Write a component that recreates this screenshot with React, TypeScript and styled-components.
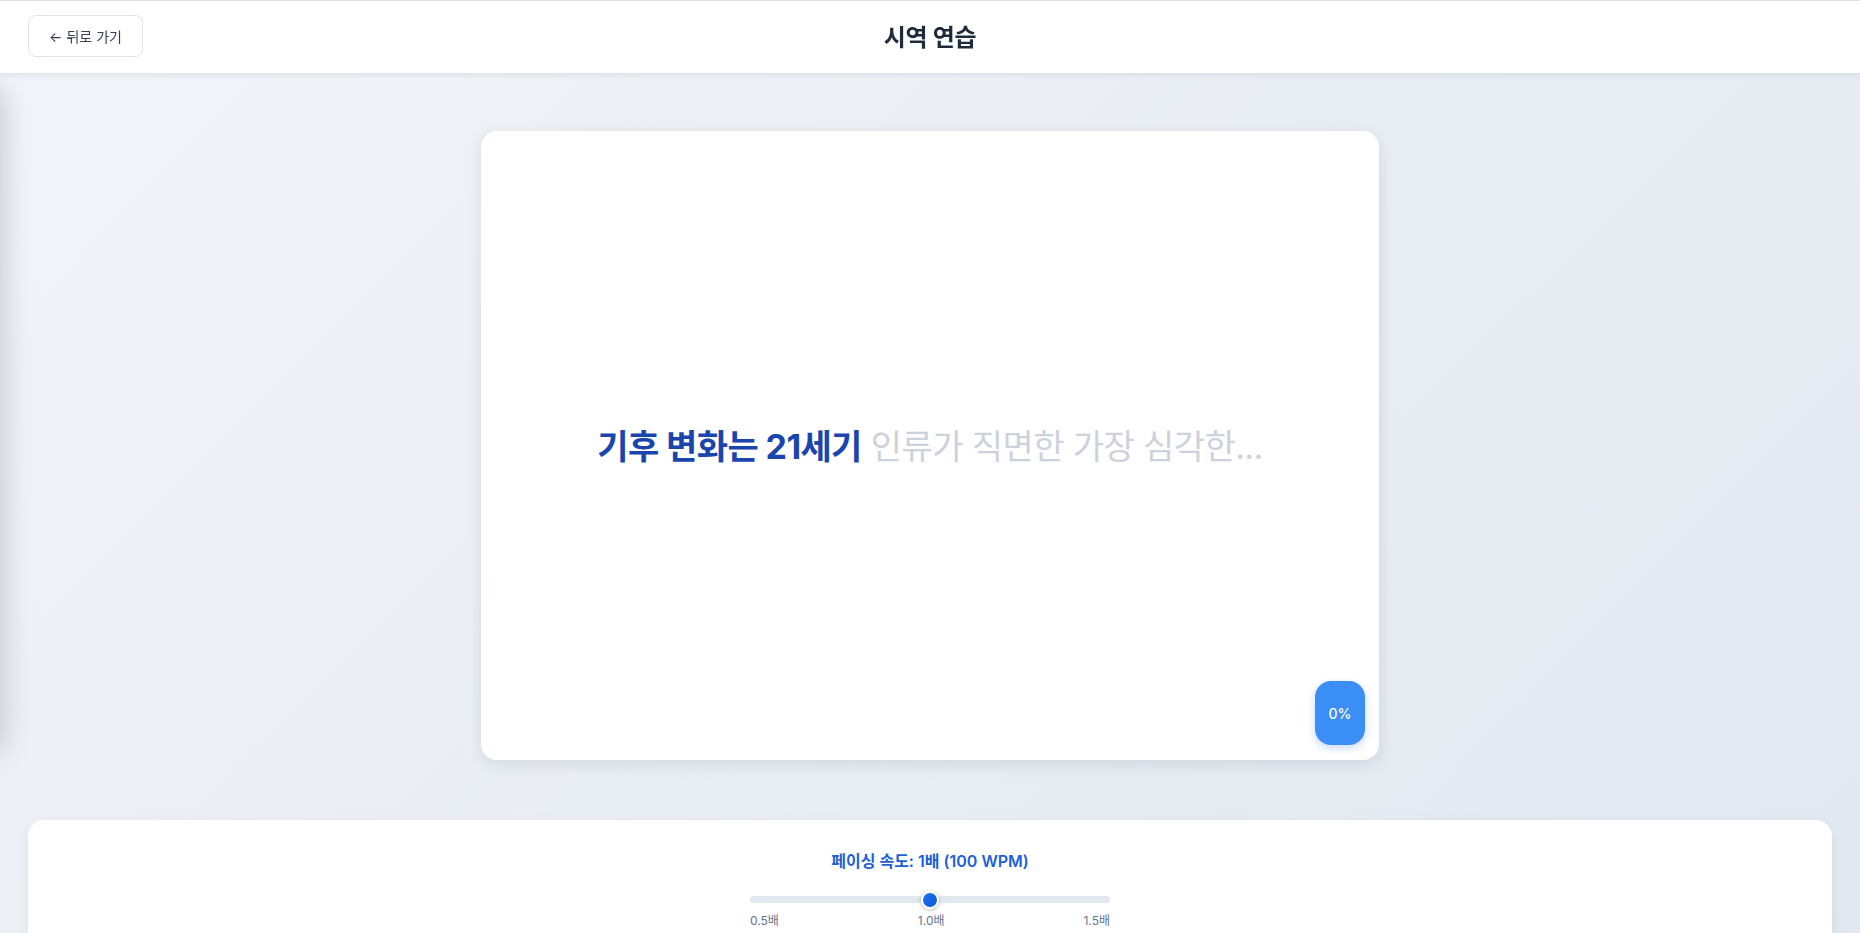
import React, { useState } from "react";
import styled, { createGlobalStyle } from "styled-components";

const GlobalStyle = createGlobalStyle`
  * {
    box-sizing: border-box;
  }

  html,
  body {
    margin: 0;
    padding: 0;
    height: 100%;
    overflow: hidden;
  }

  body {
    font-family: Inter, "Noto Sans CJK KR", "Noto Sans", sans-serif;
    background: linear-gradient(135deg, #f1f4f8 0%, #e2e8f0 100%);
    color: #1e293b;
  }
`;

const Page = styled.div`
  min-height: 100vh;
  display: flex;
  flex-direction: column;
  border-top: 1px solid #e1e5dd;
`;

const Header = styled.header`
  height: 72px;
  background: #ffffff;
  box-shadow: 0 2px 6px rgba(15, 23, 42, 0.08);
  display: grid;
  grid-template-columns: 1fr auto 1fr;
  align-items: center;
  padding: 0 28px;
  position: relative;
  z-index: 2;
`;

const BackButton = styled.button`
  justify-self: start;
  width: 115px;
  height: 42px;
  border: 1px solid #dfe5ee;
  border-radius: 8px;
  background: #ffffff;
  color: #334155;
  font-family: inherit;
  font-size: 14px;
  cursor: pointer;
  display: flex;
  align-items: center;
  justify-content: center;
  gap: 4px;
  margin-top: -2px;
`;

const Title = styled.h1`
  margin: -4px 0 0;
  font-size: 24px;
  font-weight: 700;
  color: #1e293b;
  letter-spacing: -0.3px;
`;

const Main = styled.main`
  flex: 1;
  display: flex;
  flex-direction: column;
  align-items: center;
  padding: 58px 28px 0;
  gap: 60px;
`;

const ReaderCard = styled.section`
  width: 898px;
  height: 629px;
  background: #ffffff;
  border-radius: 16px;
  box-shadow: 0 4px 16px rgba(15, 23, 42, 0.1);
  display: flex;
  align-items: center;
  justify-content: center;
  position: relative;
`;

const Passage = styled.p`
  margin: 4px 0 0;
  font-size: 34px;
  line-height: 1.3;
  letter-spacing: -0.6px;
`;

const Read = styled.span`
  color: #1a45ad;
  font-weight: 700;
`;

const Upcoming = styled.span`
  color: #cbd2dc;
  font-weight: 400;
`;

const ProgressBadge = styled.div`
  position: absolute;
  right: 14px;
  bottom: 15px;
  width: 50px;
  height: 64px;
  border-radius: 16px;
  background: #3a8ef5;
  color: #ffffff;
  font-size: 14px;
  font-weight: 500;
  display: flex;
  align-items: center;
  justify-content: center;
  box-shadow: 0 3px 8px rgba(59, 130, 246, 0.3);
`;

const ControlPanel = styled.section`
  align-self: stretch;
  background: #ffffff;
  border-radius: 16px;
  box-shadow: 0 4px 14px rgba(15, 23, 42, 0.06);
  padding: 29px 0 40px;
  display: flex;
  flex-direction: column;
  align-items: center;
`;

const SpeedLabel = styled.div`
  font-size: 16px;
  font-weight: 600;
  color: #1c5fd8;
  line-height: 24px;
`;

const SliderBlock = styled.div`
  width: 360px;
  margin-top: 23px;
  display: flex;
  flex-direction: column;
  gap: 10px;
`;

const Track = styled.div`
  height: 7px;
  border-radius: 4px;
  background: #e2e8f0;
  position: relative;
`;

const Thumb = styled.div`
  position: absolute;
  top: 50%;
  width: 18px;
  height: 18px;
  border-radius: 50%;
  background: linear-gradient(135deg, #1a73f0, #0a58d6);
  border: 2px solid #ffffff;
  box-shadow: 0 1px 4px rgba(15, 23, 42, 0.3);
  transform: translate(-50%, -50%);
`;

const Ticks = styled.div`
  display: flex;
  justify-content: space-between;
  font-size: 12px;
  color: #64748b;
  line-height: 16px;
`;

const OffscreenDrawer = styled.div`
  position: fixed;
  left: -300px;
  top: 90px;
  width: 300px;
  height: 660px;
  background: #ffffff;
  box-shadow: 0 0 30px rgba(15, 23, 42, 0.22);
  z-index: 1;
`;

export default function App() {
  const [speed] = useState(1);
  const min = 0.5;
  const max = 1.5;
  const pct = ((speed - min) / (max - min)) * 100;

  return (
    <>
      <GlobalStyle />
      <OffscreenDrawer />
      <Page>
        <Header>
          <BackButton>
            <span>←</span>
            <span>뒤로 가기</span>
          </BackButton>
          <Title>시역 연습</Title>
          <div />
        </Header>

        <Main>
          <ReaderCard>
            <Passage>
              <Read>기후 변화는 21세기</Read> <Upcoming>인류가 직면한 가장 심각한...</Upcoming>
            </Passage>
            <ProgressBadge>0%</ProgressBadge>
          </ReaderCard>

          <ControlPanel>
            <SpeedLabel>페이싱 속도: {speed}배 (100 WPM)</SpeedLabel>
            <SliderBlock>
              <Track>
                <Thumb style={{ left: `${pct}%` }} />
              </Track>
              <Ticks>
                <span>0.5배</span>
                <span>1.0배</span>
                <span>1.5배</span>
              </Ticks>
            </SliderBlock>
          </ControlPanel>
        </Main>
      </Page>
    </>
  );
}
